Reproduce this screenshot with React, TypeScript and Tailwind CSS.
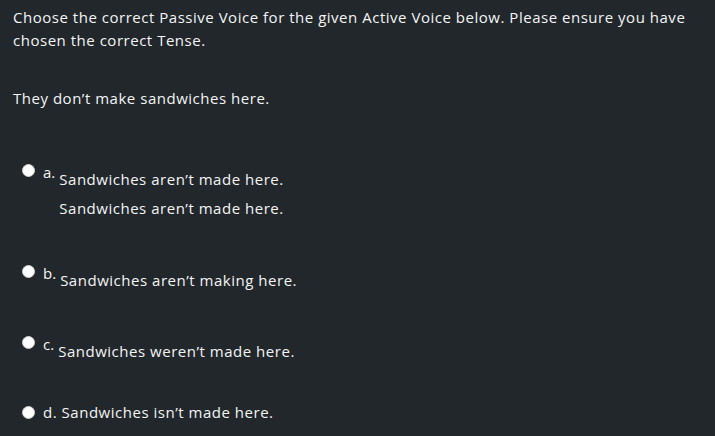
import React from "react";

const font = { fontFamily: '"Open Sans", "Liberation Sans", sans-serif' };

function Radio() {
  return <span className="block w-[13px] h-[13px] rounded-full bg-white border border-[#d0d0d0] shrink-0" />;
}

export default function App() {
  return (
    <div className="w-[715px] h-[436px] bg-[#21272b] text-[#f4f4f4] overflow-hidden tracking-[0.52px] font-medium" style={font}>
      <div className="pl-[13px] pt-[6px] w-[710px]">
        <p className="text-[15px] leading-[23px]">
          Choose the correct Passive Voice for the given Active Voice below. Please ensure you have
          <br />
          chosen the correct Tense.
        </p>
        <p className="text-[15px] leading-[23px] mt-[35px]">They don’t make sandwiches here.</p>

        <div className="mt-[54px] flex items-start">
          <span className="ml-[9px]"><Radio /></span>
          <span className="ml-[8px] text-[15px] leading-[14px] mt-[1px] tracking-normal">a.</span>
          <div className="ml-[4px] mt-[4px] text-[15px] leading-[23px]">
            <p>Sandwiches aren’t made here.</p>
            <p className="mt-[6px]">Sandwiches aren’t made here.</p>
          </div>
        </div>

        <div className="mt-[45px] flex items-start">
          <span className="ml-[9px]"><Radio /></span>
          <span className="ml-[8px] text-[15px] leading-[14px] mt-[1px] tracking-normal">b.</span>
          <div className="ml-[4px] mt-[4px] text-[15px] leading-[23px]">
            <p>Sandwiches aren’t making here.</p>
          </div>
        </div>

        <div className="mt-[44px] flex items-start">
          <span className="ml-[9px]"><Radio /></span>
          <span className="ml-[8px] text-[15px] leading-[14px] mt-[1px] tracking-normal">c.</span>
          <div className="ml-[4px] mt-[4px] text-[15px] leading-[23px]">
            <p>Sandwiches weren’t made here.</p>
          </div>
        </div>

        <div className="mt-[38px] flex items-center text-[15px] leading-[23px]">
          <span className="ml-[9px]"><Radio /></span>
          <span className="ml-[8px]">d. Sandwiches isn’t made here.</span>
        </div>
      </div>
    </div>
  );
}
